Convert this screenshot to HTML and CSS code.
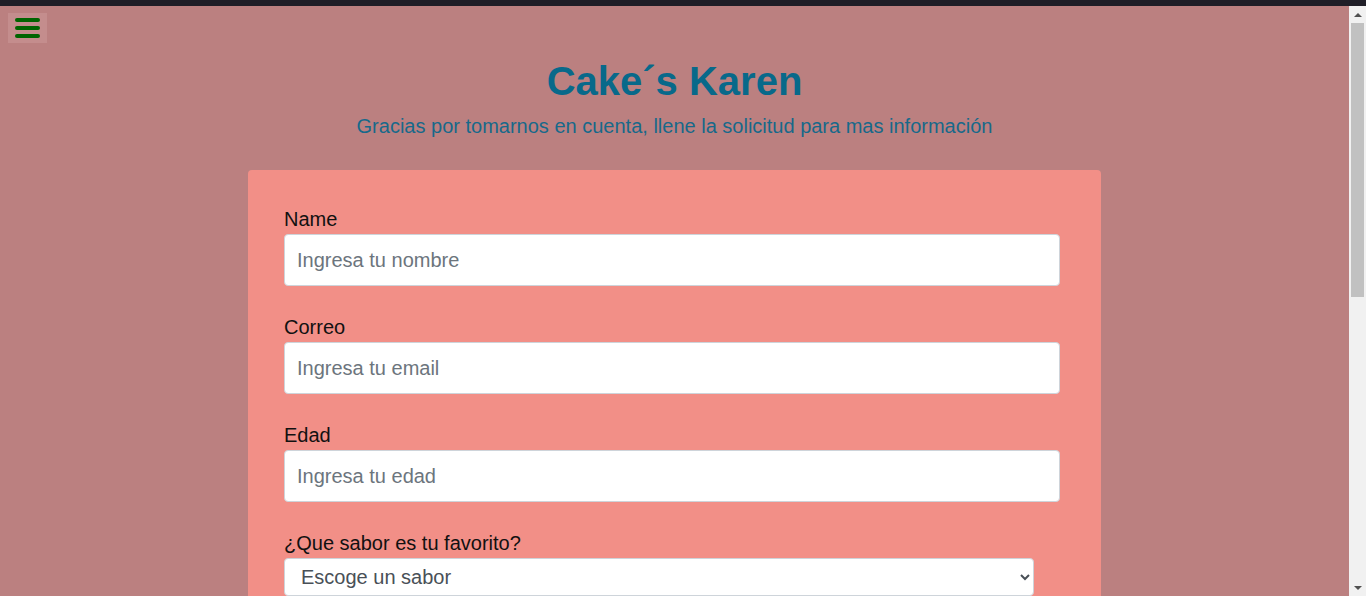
FILE: index.html
```html
<!DOCTYPE html>
<html lang="es">
<head>
<meta charset="utf-8">
<title>Cake´s Karen</title>
<link rel="stylesheet" href="styles.css">
</head>
<body>
<div class="chrome"></div>
<div class="window">
  <div class="viewport">
    <header class="top">
      <button class="menu" aria-label="menu">
        <span></span><span></span><span></span>
      </button>
    </header>
    <div class="intro">
      <h1 class="title">Cake´s Karen</h1>
      <p class="subtitle">Gracias por tomarnos en cuenta, llene la solicitud para mas información</p>
    </div>
    <form class="card">
      <div class="field">
        <label class="label" for="name">Name</label>
        <input class="input" id="name" type="text" placeholder="Ingresa tu nombre">
      </div>
      <div class="field">
        <label class="label" for="email">Correo</label>
        <input class="input" id="email" type="email" placeholder="Ingresa tu email">
      </div>
      <div class="field">
        <label class="label" for="age">Edad</label>
        <input class="input" id="age" type="number" placeholder="Ingresa tu edad">
      </div>
      <div class="field">
        <label class="label" for="flavor">¿Que sabor es tu favorito?</label>
        <select class="select" id="flavor">
          <option>Escoge un sabor</option>
          <option>Chocolate</option>
          <option>Vainilla</option>
          <option>Fresa</option>
        </select>
      </div>
      <div class="field">
        <label class="label">¿Cómo nos conociste?</label>
        <div class="options">
          <label class="opt"><input type="radio" name="src"> Redes sociales</label>
          <label class="opt"><input type="radio" name="src"> Recomendación</label>
          <label class="opt"><input type="radio" name="src"> Otro</label>
        </div>
      </div>
      <div class="field">
        <label class="label" for="msg">Comentarios</label>
        <textarea class="input area" id="msg" placeholder="Escribe tus comentarios"></textarea>
      </div>
      <button class="submit" type="submit">Enviar</button>
    </form>
  </div>
  <div class="scrollbar" aria-hidden="true">
    <div class="arrow up"></div>
    <div class="track"><div class="thumb"></div></div>
    <div class="arrow down"></div>
  </div>
</div>
</body>
</html>
```

FILE: styles.css
```css
html, body {
  margin: 0;
  padding: 0;
  height: 100%;
  overflow: hidden;
}
body {
  font-family: "Liberation Sans", Arial, sans-serif;
  background: #1f1e27;
  display: flex;
  flex-direction: column;
}
.chrome {
  height: 6px;
  flex: none;
  background: #1f1e27;
}
.window {
  flex: 1;
  min-height: 0;
  display: flex;
}
.viewport {
  flex: 1;
  min-width: 0;
  overflow: hidden;
  background: #bb8080;
  padding-bottom: 40px;
}
.scrollbar {
  width: 17px;
  flex: none;
  background: #f1f1f1;
  display: flex;
  flex-direction: column;
}
.arrow {
  height: 17px;
  flex: none;
  display: flex;
  align-items: center;
  justify-content: center;
}
.arrow::before {
  content: "";
  width: 0;
  height: 0;
  border-left: 4px solid transparent;
  border-right: 4px solid transparent;
}
.arrow.up::before {
  border-bottom: 4px solid #505050;
}
.arrow.down::before {
  border-top: 4px solid #505050;
}
.track {
  flex: 1;
  padding: 0 2px;
}
.thumb {
  height: 274px;
  background: #c1c1c1;
}
.top {
  padding: 7px 8px 0;
  height: 30px;
}
.menu {
  width: 39px;
  height: 30px;
  border: none;
  padding: 0;
  background: #c48d8d;
  display: flex;
  flex-direction: column;
  justify-content: center;
  align-items: center;
  gap: 4px;
}
.menu span {
  display: block;
  width: 25px;
  height: 4px;
  border-radius: 2px;
  background: #006400;
}
.intro {
  text-align: center;
}
.title {
  margin: 14px 0 0;
  font-size: 40px;
  line-height: 48px;
  font-weight: bold;
  color: #08698a;
}
.subtitle {
  margin: 9px 0 0;
  font-size: 20px;
  line-height: 24px;
  color: #17698a;
}
.card {
  width: 853px;
  box-sizing: border-box;
  margin: 32px auto 0;
  padding: 40px 41px 40px 36px;
  background: #f28f87;
  border-radius: 4px;
  display: flex;
  flex-direction: column;
  gap: 32px;
}
.field {
  display: flex;
  flex-direction: column;
  align-items: flex-start;
}
.label {
  font-size: 20px;
  line-height: 18px;
  margin-bottom: 6px;
  color: #111;
}
.input {
  width: 100%;
  box-sizing: border-box;
  height: 52px;
  padding: 0 12px;
  font-family: inherit;
  font-size: 20px;
  color: #495057;
  background: #fff;
  border: 1px solid #ced4da;
  border-radius: 4px;
}
.input::placeholder {
  color: #6c757d;
}
.area {
  height: 120px;
  padding-top: 12px;
  resize: none;
}
.select {
  width: 750px;
  height: 38px;
  box-sizing: border-box;
  padding: 0 12px;
  font-family: inherit;
  font-size: 20px;
  color: #495057;
  background: #fff;
  border: 1px solid #ced4da;
  border-radius: 4px;
}
.options {
  display: flex;
  flex-direction: column;
  gap: 8px;
  margin-top: 8px;
}
.opt {
  font-size: 18px;
  color: #111;
}
.submit {
  align-self: flex-start;
  font-family: inherit;
  font-size: 20px;
  padding: 10px 24px;
  color: #fff;
  background: #08698a;
  border: none;
  border-radius: 4px;
}
```
